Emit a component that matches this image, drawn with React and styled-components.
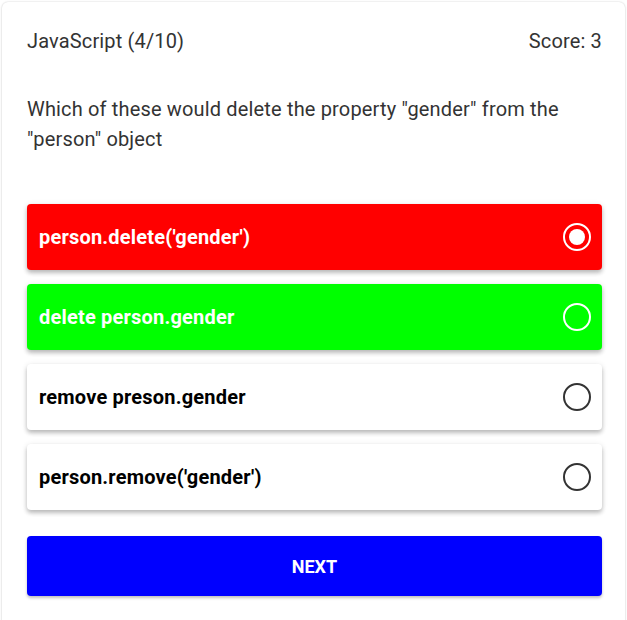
import React, { useState } from 'react'
import styled, { createGlobalStyle } from 'styled-components'

const GlobalStyle = createGlobalStyle`
  body {
    margin: 0;
    background: #fff;
    font-family: Roboto, "Liberation Sans", sans-serif;
  }
`

const options = [
  { text: "person.delete('gender')", state: 'wrong' },
  { text: 'delete person.gender', state: 'right' },
  { text: 'remove preson.gender', state: 'idle' },
  { text: "person.remove('gender')", state: 'idle' },
]

const selected = 0

function Radio({ checked, light }) {
  const color = light ? '#fff' : '#333'
  return (
    <svg width="30" height="30" viewBox="0 0 30 30">
      <circle cx="15" cy="15" r="13" fill="none" stroke={color} strokeWidth="2" />
      {checked && <circle cx="15" cy="15" r="8" fill={color} />}
    </svg>
  )
}

function App() {
  const [picked, setPicked] = useState(selected)

  return (
    <Page>
      <GlobalStyle />
      <Card>
        <Header>
          <span>JavaScript (4/10)</span>
          <span>Score: 3</span>
        </Header>
        <Question>
          Which of these would delete the property "gender" from the "person" object
        </Question>
        <Options>
          {options.map((o, i) => (
            <Option key={o.text} state={o.state} onClick={() => setPicked(i)}>
              <span>{o.text}</span>
              <Radio checked={picked === i} light={o.state !== 'idle'} />
            </Option>
          ))}
        </Options>
        <NextButton>Next</NextButton>
      </Card>
    </Page>
  )
}

export default App

const Page = styled.div`
  padding: 2px 2px 0;
  height: 620px;
  box-sizing: border-box;
  overflow: hidden;
`

const Card = styled.div`
  background: #fff;
  border-radius: 6px;
  box-shadow: 0 0 2px rgba(0, 0, 0, 0.18), 0 1px 3px rgba(0, 0, 0, 0.08);
  padding: 27px 23px 40px 25px;
  min-height: 700px;
`

const Header = styled.div`
  display: flex;
  justify-content: space-between;
  font-size: 20px;
  line-height: 24px;
  letter-spacing: 0.15px;
  color: #333;
`

const Question = styled.p`
  margin: 41px 0 0;
  font-size: 20px;
  line-height: 30px;
  letter-spacing: 0.16px;
  color: #333;
  padding-right: 30px;
`

const Options = styled.div`
  display: flex;
  flex-direction: column;
  gap: 14px;
  margin-top: 50px;
`

const bg = { wrong: '#ff0000', right: '#00ff00', idle: '#fff' }

const Option = styled.div`
  display: flex;
  align-items: center;
  justify-content: space-between;
  height: 66px;
  padding: 0 10px 0 12px;
  border-radius: 4px;
  background: ${p => bg[p.state]};
  color: ${p => (p.state === 'idle' ? '#000' : '#fff')};
  font-size: 20px;
  font-weight: 700;
  letter-spacing: 0.2px;
  cursor: pointer;
  box-shadow: 0 3px 4px rgba(0, 0, 0, 0.22), 0 1px 6px rgba(0, 0, 0, 0.1);

  svg {
    display: block;
  }
`

const NextButton = styled.button`
  display: block;
  width: 100%;
  height: 60px;
  margin-top: 26px;
  border: none;
  border-radius: 4px;
  background: #0000ff;
  color: #fff;
  font-family: Roboto, "Liberation Sans", sans-serif;
  font-size: 18px;
  font-weight: 700;
  text-transform: uppercase;
  box-shadow: 0 2px 3px rgba(0, 0, 0, 0.25);
  cursor: pointer;
`
